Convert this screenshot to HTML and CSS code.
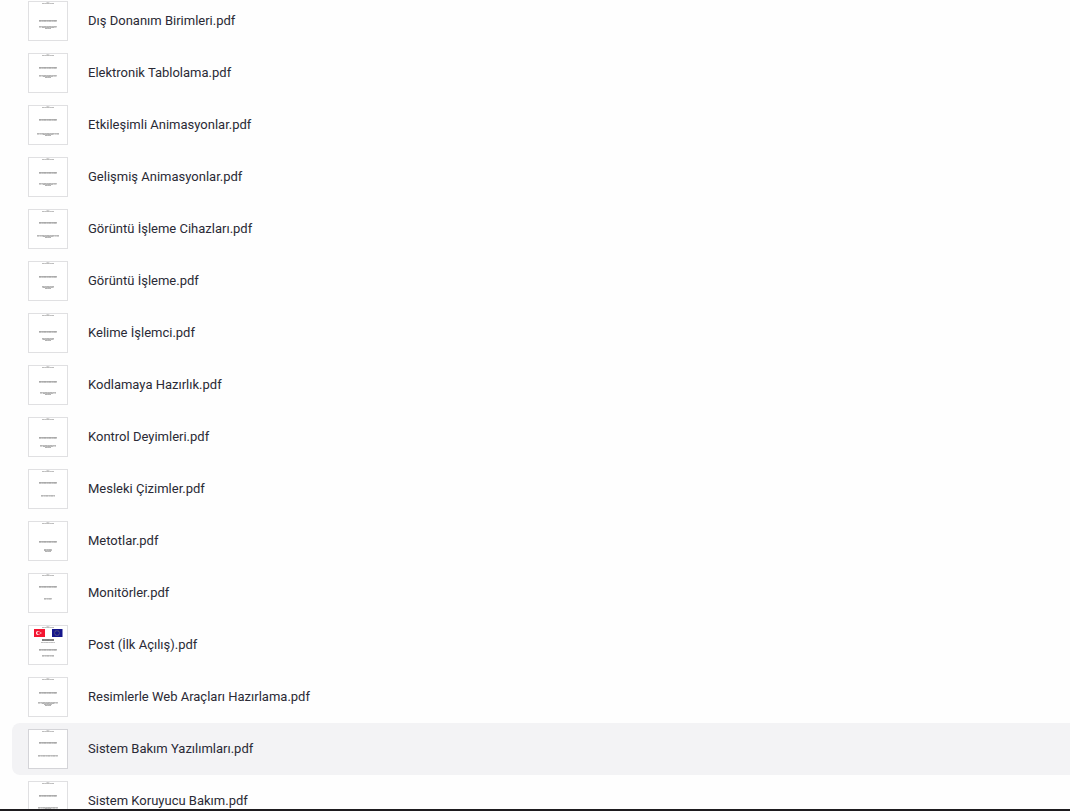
FILE: index.html
```html
<!DOCTYPE html>
<html lang="tr">
<head>
    <meta charset="UTF-8">
    <meta name="viewport" content="width=device-width, initial-scale=1.0">
    <title>Dosyalar</title>
    <link rel="stylesheet" href="styles.css">
</head>
<body>

<main class="files">
    <ul class="file-list" id="file-list">
        <!-- Files are generated in script.js -->
    </ul>
</main>

<footer class="bottom-bar"></footer>

<script src="script.js"></script>
</body>
</html>
```

FILE: styles.css
```css
body {
    display: flex;
    flex-direction: column;
    height: 100vh;
    margin: 0;
    background-color: #fefefe;
    color: #2a2a35;
    font-family: 'Roboto', 'Liberation Sans', sans-serif;
    font-size: 13px;
    line-height: 20px;
}
.files {
    flex: 1;
    min-height: 0;
    overflow: hidden;
}
.file-list {
    list-style: none;
    margin: -5px 0 0 12px; /* list is scrolled a little */
    padding: 0;
}
.file {
    display: flex;
    align-items: center;
    gap: 20px;
    padding: 6px 16px;
    border-radius: 8px 0 0 8px;
    color: inherit;
    text-decoration: none;
}
.file:hover,
.file.active {
    background-color: #f3f3f5;
}
.thumb {
    flex: none;
    box-sizing: border-box;
    width: 40px;
    height: 40px;
    border: 1px solid #e0e0e2;
    background-color: white;
}
.file.active .thumb {
    border-color: #d4d4d8;
}
.bottom-bar {
    height: 2px;
    background-color: #1e1c1f;
}
```

FILE: script.js
```js
// heading / title: distance from the top of the page, width: title width,
// lines: widths of the short lines under the title
const files = [
    { name: 'Dış Donanım Birimleri.pdf', heading: 19, title: 25, width: 18, lines: [12, 6] },
    { name: 'Elektronik Tablolama.pdf', heading: 14, title: 22, width: 18, lines: [10, 6] },
    { name: 'Etkileşimli Animasyonlar.pdf', heading: 14, title: 28, width: 22, lines: [10, 6] },
    { name: 'Gelişmiş Animasyonlar.pdf', heading: 15, title: 26, width: 18, lines: [10, 6] },
    { name: 'Görüntü İşleme Cihazları.pdf', heading: 13, title: 26, width: 22, lines: [10, 6] },
    { name: 'Görüntü İşleme.pdf', heading: 15, title: 25, width: 12, lines: [10, 6] },
    { name: 'Kelime İşlemci.pdf', heading: 18, title: 25, width: 12, lines: [10, 6] },
    { name: 'Kodlamaya Hazırlık.pdf', heading: 16, title: 27, width: 16, lines: [10, 6] },
    { name: 'Kontrol Deyimleri.pdf', heading: 20, title: 28, width: 16, lines: [10, 6] },
    { name: 'Mesleki Çizimler.pdf', heading: 13, title: 26, width: 14, lines: [] },
    { name: 'Metotlar.pdf', heading: 20, title: 28, width: 8, lines: [8, 6] },
    { name: 'Monitörler.pdf', heading: 13, title: 25, width: 8, lines: [] },
    { name: 'Post (İlk Açılış).pdf', heading: 24, title: 30, width: 12, lines: [], flags: true },
    { name: 'Resimlerle Web Araçları Hazırlama.pdf', heading: 15, title: 25, width: 20, lines: [12, 8, 6] },
    { name: 'Sistem Bakım Yazılımları.pdf', heading: 13, title: 26, width: 20, lines: [], active: true },
    { name: 'Sistem Koruyucu Bakım.pdf', heading: 14, title: 26, width: 20, lines: [6] }
];

// One line of print, too small to read
function line(y, width, color, height = 1) {
    const x = 20 - width / 2;
    return `<rect x="${x}" y="${y}" width="${width}" height="${height}" fill="${color}"/>
        <path d="M${x} ${y + height / 2}h${width}" stroke="#555" stroke-opacity=".12" stroke-width="${height}" stroke-dasharray="2 1.3 1 .7"/>`;
}

function flags() {
    let stars = '';
    for (let i = 0; i < 12; i++) {
        const a = i * Math.PI / 6;
        stars += `<circle cx="${29 + Math.cos(a) * 2.3}" cy="${8 + Math.sin(a) * 2.3}" r=".45" fill="#a9a468"/>`;
    }
    return `<rect x="6" y="4" width="11" height="8" fill="#f31531"/>
        <circle cx="10" cy="8" r="2" fill="#fff"/>
        <circle cx="10.6" cy="8" r="1.4" fill="#f31531"/>
        <circle cx="12.8" cy="8" r=".7" fill="#fff"/>
        <rect x="24" y="4" width="10.5" height="8" fill="#15168c"/>${stars}
        ${line(14, 12, '#858585', 2)}
        ${line(17, 14, '#d0d0d0')}`;
}

function thumbnail(file) {
    let page = line(1, 3, '#e0e0e0') + line(2, 12, '#ccc');
    if (file.flags) page += flags();
    page += line(file.heading, 18, '#b4b4b4');
    page += line(file.heading + 1, 18, '#d4d4d4');
    page += line(file.title, file.width, '#c4c4c4');
    page += line(file.title + 1, file.width, '#e4e4e4');
    file.lines.forEach((width, i) => {
        page += line(file.title + 1 + i, width, '#c0c0c0');
    });
    return `<svg class="thumb" viewBox="1 1 38 38" aria-hidden="true">${page}</svg>`;
}

function renderFiles() {
    const list = document.getElementById('file-list');
    files.forEach(file => {
        const item = document.createElement('li');
        item.innerHTML = `
            <a class="file${file.active ? ' active' : ''}" href="#">
                ${thumbnail(file)}
                <span class="name">${file.name}</span>
            </a>
        `;
        list.appendChild(item);
    });
}

renderFiles();
```
